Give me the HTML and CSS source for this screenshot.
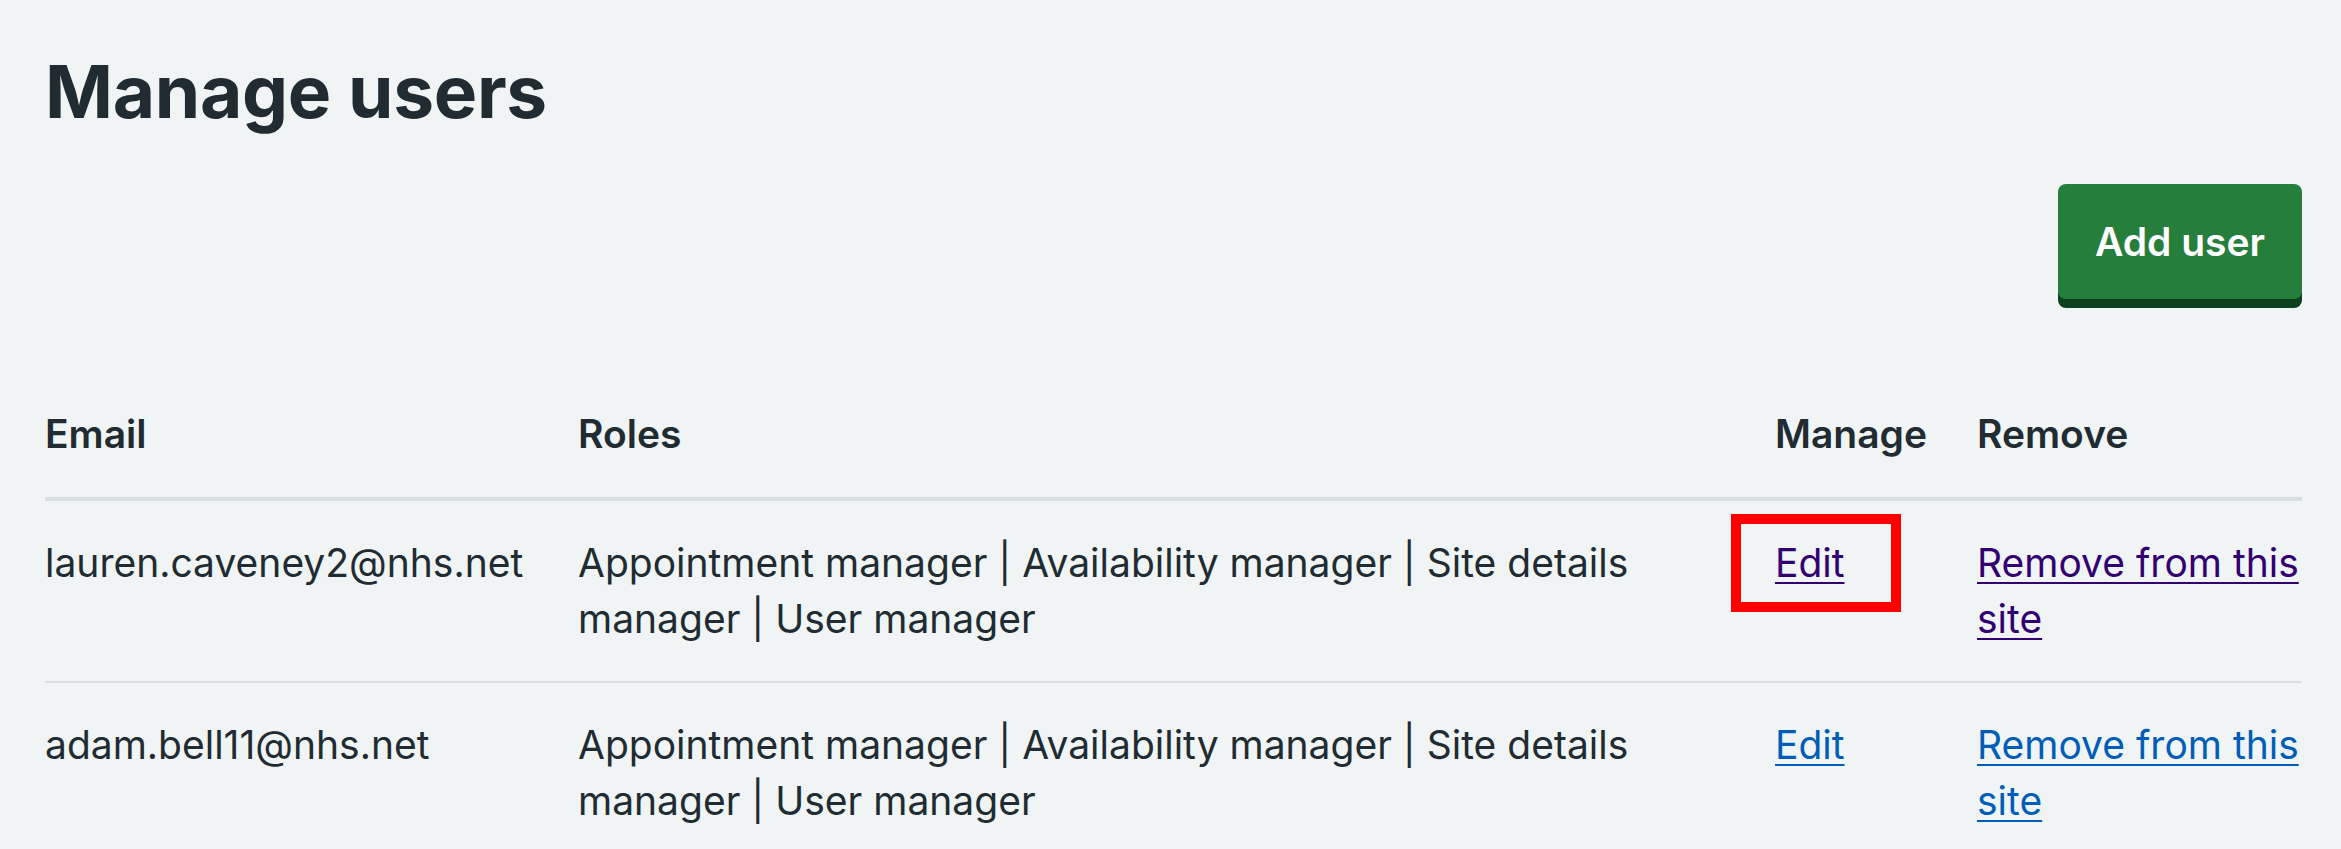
FILE: index.html
```html
<!DOCTYPE html>
<html lang="en">
<head>
<meta charset="utf-8">
<title>Manage users</title>
<link rel="stylesheet" href="styles.css">
</head>
<body>
<main class="page">
  <h1 class="title">Manage users</h1>
  <div class="actions">
    <a class="btn" href="#">Add user</a>
  </div>
  <table class="users">
    <colgroup>
      <col class="c-email">
      <col class="c-roles">
      <col class="c-manage">
      <col class="c-remove">
    </colgroup>
    <thead>
      <tr>
        <th>Email</th>
        <th>Roles</th>
        <th>Manage</th>
        <th>Remove</th>
      </tr>
    </thead>
    <tbody>
      <tr>
        <td>lauren.caveney2@nhs.net</td>
        <td>Appointment manager | Availability manager | Site details manager | User manager</td>
        <td><span class="annot"><a class="link visited" href="#">Edit</a><span class="annot-box"></span></span></td>
        <td><a class="link visited" href="#">Remove from this site</a></td>
      </tr>
      <tr>
        <td>adam.bell11@nhs.net</td>
        <td>Appointment manager | Availability manager | Site details manager | User manager</td>
        <td><a class="link" href="#">Edit</a></td>
        <td><a class="link" href="#">Remove from this site</a></td>
      </tr>
    </tbody>
  </table>
</main>
</body>
</html>
```
FILE: styles.css
```css
html, body {
  margin: 0;
  padding: 0;
  background: #f0f4f5;
}

body {
  font-family: "Inter", "Liberation Sans", sans-serif;
  color: #212b32;
  font-size: 39px;
  line-height: 56px;
}

.page {
  padding: 47px 39px 0 45px;
}

.title {
  margin: 0;
  font-size: 73px;
  line-height: 89px;
  font-weight: 700;
  letter-spacing: -0.3px;
}

.actions {
  display: flex;
  justify-content: flex-end;
  margin-top: 48px;
}

.btn {
  display: flex;
  align-items: center;
  justify-content: center;
  width: 244px;
  height: 115px;
  box-sizing: border-box;
  background: #267e3c;
  color: #ffffff;
  font-size: 39px;
  font-weight: 600;
  text-decoration: none;
  border-radius: 8px;
  box-shadow: 0 9px 0 #0d401e;
}

.users {
  width: 100%;
  margin-top: 75px;
  border-collapse: collapse;
  table-layout: fixed;
}

.c-email { width: 533px; }
.c-roles { width: 1197px; }
.c-manage { width: 202px; }
.c-remove { width: 325px; }

.users th,
.users td {
  text-align: left;
  vertical-align: top;
  padding: 34px 31px 34px 0;
}

.users th:last-child,
.users td:last-child {
  padding-right: 0;
}

.users th {
  font-weight: 600;
  border-bottom: 4px solid #d8dde0;
  padding-top: 32px;
  padding-bottom: 35px;
}

.users td {
  border-bottom: 2px solid #d8dde0;
}

.users tbody tr:last-child td {
  border-bottom: none;
}

.link {
  color: #005eb8;
  text-decoration: underline;
  text-decoration-thickness: 2px;
  text-underline-offset: 5px;
}

.link.visited {
  color: #330072;
}

.annot {
  position: relative;
  display: inline-block;
}

.annot-box {
  position: absolute;
  left: -44px;
  top: -21px;
  width: 170px;
  height: 98px;
  box-sizing: border-box;
  border: 10px solid #ff0000;
}
```
